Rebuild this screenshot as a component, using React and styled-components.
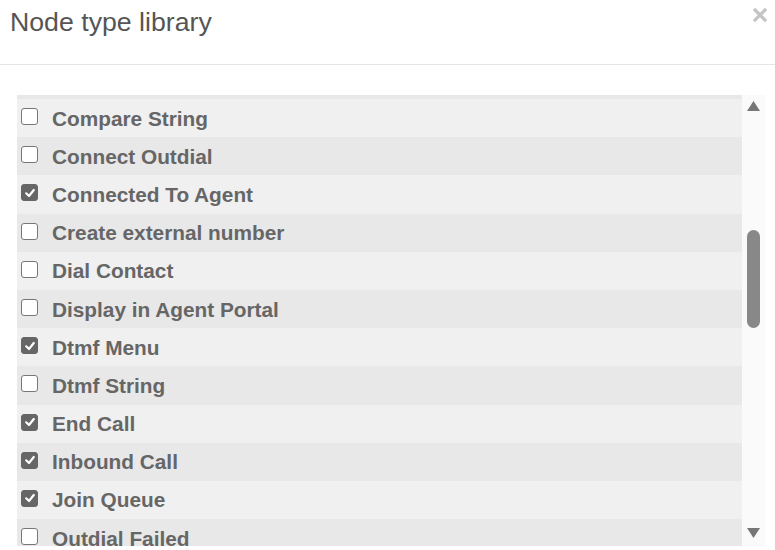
import React from 'react';
import styled, { createGlobalStyle } from 'styled-components';

const GlobalStyle = createGlobalStyle`
	body {
		margin: 0;
		background: #fff;
		font-family: "Liberation Sans", Arial, sans-serif;
	}
`;

const Modal = styled.div`
	width: 775px;
	height: 550px;
	overflow: hidden;
	background: #fff;
`;

const Header = styled.div`
	display: flex;
	justify-content: space-between;
	align-items: flex-start;
	height: 65px;
	box-sizing: border-box;
	padding: 5px 0 0 10px;
	border-bottom: 1px solid #e5e5e5;
`;

const Title = styled.h4`
	margin: 0;
	font-size: 26.7px;
	font-weight: normal;
	line-height: 34px;
	color: #555;
`;

const Close = styled.button`
	display: flex;
	border: 0;
	background: none;
	padding: 0;
	margin: 3px 8px 0 0;
	cursor: pointer;
`;

const Body = styled.div`
	display: flex;
	padding: 30px 10px 0 17px;
`;

const List = styled.div`
	flex: 1;
	height: 451px;
	overflow: hidden;
`;

const Spacer = styled.div`
	height: 4px;
	background: #e8e8e8;
`;

const Row = styled.label`
	display: flex;
	align-items: center;
	height: 38.2px;
	padding-left: 4px;
	gap: 14px;
	background: ${props => (props.odd ? '#e8e8e8' : '#f0f0f0')};
	font-size: 20.8px;
	font-weight: bold;
	line-height: 24px;
	padding-top: 1px;
	box-sizing: border-box;
	color: #666;
	cursor: pointer;
`;

const Box = styled.span`
	flex: none;
	display: flex;
	align-items: center;
	justify-content: center;
	width: 17px;
	height: 17px;
	box-sizing: border-box;
	margin-top: -4px;
	border-radius: 3px;
	border: 1.5px solid ${props => (props.checked ? '#666' : '#777')};
	background: ${props => (props.checked ? '#666' : '#fff')};
`;

const Scrollbar = styled.div`
	width: 23px;
	height: 451px;
	box-sizing: border-box;
	padding: 6px 0 8px;
	display: flex;
	flex-direction: column;
	align-items: center;
	background: #fafafa;
`;

const Track = styled.div`
	flex: 1;
	width: 13px;
`;

const Thumb = styled.div`
	width: 13px;
	border-radius: 7px;
	background: #888;
`;

const Arrow = ({ down }) => (
	<svg width="13" height="10" viewBox="0 0 13 10">
		<polygon
			points={down ? '0,0 13,0 6.5,10' : '0,10 13,10 6.5,0'}
			fill="#777"
		/>
	</svg>
);

const Tick = () => (
	<svg width="12" height="12" viewBox="0 0 12 12">
		<polyline
			points="2.2,6.3 5,9 9.8,3"
			fill="none"
			stroke="#fff"
			strokeWidth="2.2"
			strokeLinecap="round"
			strokeLinejoin="round"
		/>
	</svg>
);

const CloseIcon = () => (
	<svg width="14" height="14" viewBox="0 0 14 14">
		<path
			d="M2 2 L12 12 M12 2 L2 12"
			stroke="#c4c4c4"
			strokeWidth="3.2"
			strokeLinecap="square"
		/>
	</svg>
);

const nodeTypes = [
	{ name: 'Compare String', checked: false },
	{ name: 'Connect Outdial', checked: false },
	{ name: 'Connected To Agent', checked: true },
	{ name: 'Create external number', checked: false },
	{ name: 'Dial Contact', checked: false },
	{ name: 'Display in Agent Portal', checked: false },
	{ name: 'Dtmf Menu', checked: true },
	{ name: 'Dtmf String', checked: false },
	{ name: 'End Call', checked: true },
	{ name: 'Inbound Call', checked: true },
	{ name: 'Join Queue', checked: true },
	{ name: 'Outdial Failed', checked: false },
];

const App = () => {
	return (
		<Modal>
			<GlobalStyle />
			<Header>
				<Title>Node type library</Title>
				<Close aria-label="Close">
					<CloseIcon />
				</Close>
			</Header>
			<Body>
				<List>
					<Spacer />
					{nodeTypes.map((node, i) => (
						<Row key={node.name} odd={i % 2 === 1}>
							<Box checked={node.checked}>{node.checked && <Tick />}</Box>
							{node.name}
						</Row>
					))}
				</List>
				<Scrollbar>
					<Arrow />
					<Track>
						<Thumb style={{ marginTop: 119, height: 98 }} />
					</Track>
					<Arrow down />
				</Scrollbar>
			</Body>
		</Modal>
	);
};

export default App;
